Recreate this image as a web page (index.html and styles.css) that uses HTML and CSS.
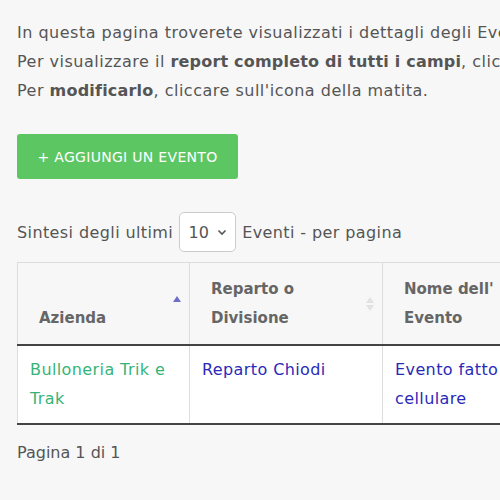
FILE: index.html
```html
<!DOCTYPE html>
<html lang="it">
<head>
  <meta charset="UTF-8">
  <meta name="viewport" content="width=device-width, initial-scale=1">
  <title>Eventi</title>
  <link rel="stylesheet" href="styles.css">
</head>
<body>

<div class="page">

  <div class="intro">
    <p>In questa pagina troverete visualizzati i dettagli degli Eventi registrati.</p>
    <p>Per visualizzare il <b>report completo di tutti i campi</b>, cliccare sul nome dell'evento.</p>
    <p>Per <b>modificarlo</b>, cliccare sull'icona della matita.</p>
  </div>

  <button class="btn-add">+ AGGIUNGI UN EVENTO</button>

  <div class="length">
    <span>Sintesi degli ultimi</span>
    <div class="select">10
      <svg width="10" height="7" viewBox="0 0 10 7"><path d="M1.5 1.5 5 5 8.5 1.5" fill="none" stroke="#555" stroke-width="1.6"/></svg>
    </div>
    <span>Eventi - per pagina</span>
  </div>

  <table class="events">
    <colgroup>
      <col class="c1"><col class="c2"><col class="c3"><col class="c4">
    </colgroup>
    <thead>
      <tr>
        <th class="sort-asc">Azienda</th>
        <th class="sortable">Reparto o Divisione</th>
        <th class="sortable">Nome dell' Evento</th>
        <th class="sortable">Data</th>
      </tr>
    </thead>
    <tbody>
      <tr>
        <td class="company">Bulloneria Trik e Trak</td>
        <td class="link">Reparto Chiodi</td>
        <td class="link">Evento fatto dal cellulare</td>
        <td>12/03/2021</td>
      </tr>
    </tbody>
  </table>

  <div class="info">Pagina 1 di 1</div>

</div>

</body>
</html>
```

FILE: styles.css
```css
body {
  margin: 0;
  font-family: 'DejaVu Sans', sans-serif;
  background-color: #f7f7f7;
  color: #555;
}
.page {
  width: 500px;
  height: 500px;
  overflow: hidden;
  padding: 18px 0 0 17px;
  box-sizing: border-box;
}
.intro p {
  margin: 0;
  font-size: 16px;
  letter-spacing: 0.5px;
  line-height: 29px;
  white-space: nowrap;
}
.intro b {
  color: #555;
  letter-spacing: 0.2px;
}
.btn-add {
  margin-top: 29px;
  width: 221px;
  height: 45px;
  background: #5cc663;
  color: #fff;
  border: none;
  border-radius: 3px;
  font-family: inherit;
  font-size: 14px;
  letter-spacing: 0.3px;
}
.length {
  margin-top: 33px;
  display: flex;
  align-items: center;
  gap: 6px;
  font-size: 16px;
  letter-spacing: 0.4px;
  white-space: nowrap;
}
.select {
  width: 57px;
  height: 40px;
  box-sizing: border-box;
  border: 1px solid #ccc;
  border-radius: 5px;
  background: #fff;
  display: flex;
  align-items: center;
  justify-content: center;
  gap: 8px;
  font-size: 16px;
  letter-spacing: 0;
}
.events {
  margin-top: 10px;
  border-collapse: collapse;
  table-layout: fixed;
  width: 760px;
  font-size: 16px;
  line-height: 29px;
}
.events .c1 { width: 172px; }
.events .c2 { width: 193px; }
.events .c3 { width: 200px; }
.events .c4 { width: 195px; }
.events th {
  text-align: left;
  vertical-align: bottom;
  padding: 12px 30px 11px 21px;
  background: #f7f7f7;
  border: 1px solid #ddd;
  border-bottom: 2px solid #444;
  font-size: 15px;
  font-weight: bold;
  color: #666;
  position: relative;
}
.events th.sort-asc::after {
  content: '';
  position: absolute;
  right: 8px;
  top: 33px;
  border: 4px solid transparent;
  border-bottom: 6px solid #6e6ec8;
  border-top: 0;
}
.events th.sortable::before {
  content: '';
  position: absolute;
  right: 8px;
  top: 34px;
  border: 4px solid transparent;
  border-bottom: 6px solid #e2e2e2;
  border-top: 0;
}
.events th.sortable::after {
  content: '';
  position: absolute;
  right: 8px;
  top: 42px;
  border: 4px solid transparent;
  border-top: 6px solid #e2e2e2;
  border-bottom: 0;
}
.events td {
  vertical-align: top;
  padding: 9px 12px 10px 12px;
  background: #fff;
  border: 1px solid #ddd;
  border-bottom: 2px solid #444;
  letter-spacing: 0.4px;
}
.events td.company {
  color: #36b477;
}
.events td.link {
  color: #2a2ab8;
}
.info {
  margin-top: 13px;
  font-size: 16px;
  line-height: 29px;
}
```
